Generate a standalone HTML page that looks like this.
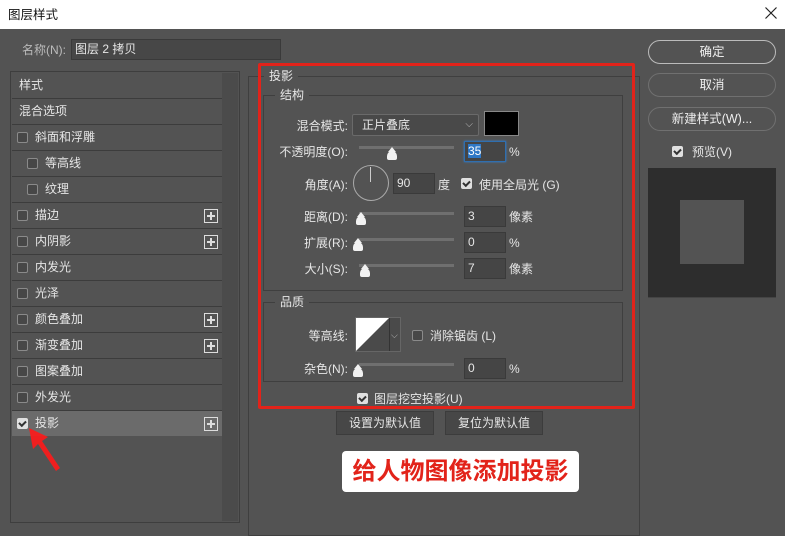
<!DOCTYPE html>
<html><head><meta charset="utf-8"><style>
*{margin:0;padding:0;box-sizing:border-box}
body{width:785px;height:521px;background:#535353;font-family:"Liberation Sans","Noto Sans CJK SC",sans-serif;font-size:12px;color:#e6e6e6;position:relative;overflow:hidden}
.a{position:absolute}
.t{white-space:nowrap;line-height:14px}
.row{position:absolute;left:12px;width:210px;height:26px;border-bottom:1px solid #3c3c3c;line-height:25px;padding-left:7px}
.cb{position:absolute;width:11px;height:11px;border:1px solid #8a8a8a;border-radius:2px;background:#474747}
.cbk{position:absolute;width:11px;height:11px;border-radius:2px;background:#e0e0e0}
.cbk:after{content:"";position:absolute;left:2px;top:1px;width:5px;height:3px;border-left:2px solid #333;border-bottom:2px solid #333;transform:rotate(-45deg) translate(-1px,1px)}
.plus{position:absolute;right:4px;top:6px;width:14px;height:14px;border:1px solid #ddd}
.plus:before{content:"";position:absolute;left:2px;top:5px;width:8px;height:2px;background:#ddd}
.plus:after{content:"";position:absolute;left:5px;top:2px;width:2px;height:8px;background:#ddd}
.inp{position:absolute;height:21px;background:#454545;border:1px solid #3a3a3a;color:#e6e6e6;line-height:19px;padding-left:3px}
.sl{position:absolute;height:3px;background:#6f6f6f}
.th{position:absolute;width:10px;height:9px;background:#f2f2f2;border-radius:5px 5px 2px 2px}
.th:before{content:"";position:absolute;left:1px;top:-4px;border-left:4px solid transparent;border-right:4px solid transparent;border-bottom:5px solid #f2f2f2}
.btn{position:absolute;height:24px;border:1px solid #707070;border-radius:12px;text-align:center;line-height:22px;color:#eee;font-size:12.5px}
.gb{position:absolute;border:1px solid #3f3f3f}
.lbl{position:absolute;background:#535353;padding:0 5px;line-height:14px}
.r{text-align:right}
</style></head><body>
<div class="a" style="left:0;top:0;width:785px;height:29px;background:#fff"></div>
<div class="a t" style="left:8px;top:8px;color:#111;font-size:12.5px">图层样式</div>
<svg class="a" style="left:765px;top:7px" width="12" height="12"><path d="M0.5 0.5L11.5 11.5M11.5 0.5L0.5 11.5" stroke="#222" stroke-width="1.2"/></svg>

<div class="a t" style="left:22px;top:43px;color:#bbb">名称(N):</div>
<div class="inp" style="left:71px;top:39px;width:210px;height:21px;background:#474747">图层 2 拷贝</div>

<div class="a" style="left:10px;top:71px;width:230px;height:452px;border:1px solid #3e3e3e;background:#535353"></div>
<div class="a" style="left:222px;top:73px;width:16px;height:448px;background:#4b4b4b"></div>
<div class="row" style="top:73px">样式</div>
<div class="row" style="top:99px">混合选项</div>
<div class="row" style="top:125px"><span class="cb" style="left:5px;top:7px"></span><span style="padding-left:16px">斜面和浮雕</span></div>
<div class="row" style="top:151px"><span class="cb" style="left:15px;top:7px"></span><span style="padding-left:26px">等高线</span></div>
<div class="row" style="top:177px"><span class="cb" style="left:15px;top:7px"></span><span style="padding-left:26px">纹理</span></div>
<div class="row" style="top:203px"><span class="cb" style="left:5px;top:7px"></span><span style="padding-left:16px">描边</span><span class="plus"></span></div>
<div class="row" style="top:229px"><span class="cb" style="left:5px;top:7px"></span><span style="padding-left:16px">内阴影</span><span class="plus"></span></div>
<div class="row" style="top:255px"><span class="cb" style="left:5px;top:7px"></span><span style="padding-left:16px">内发光</span></div>
<div class="row" style="top:281px"><span class="cb" style="left:5px;top:7px"></span><span style="padding-left:16px">光泽</span></div>
<div class="row" style="top:307px"><span class="cb" style="left:5px;top:7px"></span><span style="padding-left:16px">颜色叠加</span><span class="plus"></span></div>
<div class="row" style="top:333px"><span class="cb" style="left:5px;top:7px"></span><span style="padding-left:16px">渐变叠加</span><span class="plus"></span></div>
<div class="row" style="top:359px"><span class="cb" style="left:5px;top:7px"></span><span style="padding-left:16px">图案叠加</span></div>
<div class="row" style="top:385px"><span class="cb" style="left:5px;top:7px"></span><span style="padding-left:16px">外发光</span></div>
<div class="row" style="top:411px;background:#6b6b6b;border-bottom:none;height:25px"><span class="cbk" style="left:5px;top:7px"></span><span style="padding-left:16px">投影</span><span class="plus"></span></div>
<svg class="a" style="left:26px;top:428px" width="40" height="44"><polygon points="3,0 22,9 16,13 34,40 30,43 12,16 7,21" fill="#ff1a1a" opacity=".9"/></svg>

<div class="gb" style="left:248px;top:76px;width:392px;height:460px"></div>
<div class="lbl" style="left:264px;top:69px">投影</div>
<div class="gb" style="left:263px;top:95px;width:360px;height:196px"></div>
<div class="lbl" style="left:275px;top:88px">结构</div>

<div class="a t r" style="left:270px;top:119px;width:78px">混合模式:</div>
<div class="inp" style="left:352px;top:114px;width:127px;height:22px;background:#494949;border-color:#6a6a6a;border-radius:2px;line-height:20px;padding-left:9px">正片叠底<span style="position:absolute;right:5px;top:0;color:#bbb;font-size:10px">⌵</span></div>
<div class="a" style="left:484px;top:111px;width:35px;height:25px;background:#000;border:1px solid #888"></div>

<div class="a t r" style="left:260px;top:145px;width:88px">不透明度(O):</div>
<div class="sl" style="left:359px;top:146px;width:95px"></div>
<div class="th" style="left:387px;top:151px"></div>
<div class="inp" style="left:464px;top:141px;width:42px;border-color:#2f6fb0;box-shadow:0 0 2px #3a80d0"><span style="background:#2f78c6;color:#fff">35</span></div>
<div class="a t" style="left:509px;top:145px">%</div>

<div class="a t r" style="left:270px;top:178px;width:78px">角度(A):</div>
<div class="a" style="left:353px;top:165px;width:36px;height:36px;border:1px solid #aaa;border-radius:50%"></div>
<div class="a" style="left:370px;top:167px;width:1px;height:15px;background:#ccc"></div>
<div class="inp" style="left:393px;top:173px;width:42px">90</div>
<div class="a t" style="left:438px;top:178px">度</div>
<div class="cbk" style="left:461px;top:178px"></div>
<div class="a t" style="left:479px;top:178px">使用全局光 (G)</div>

<div class="a t r" style="left:270px;top:210px;width:78px">距离(D):</div>
<div class="sl" style="left:359px;top:212px;width:95px"></div>
<div class="th" style="left:356px;top:216px"></div>
<div class="inp" style="left:464px;top:206px;width:42px">3</div>
<div class="a t" style="left:509px;top:210px">像素</div>

<div class="a t r" style="left:270px;top:236px;width:78px">扩展(R):</div>
<div class="sl" style="left:359px;top:238px;width:95px"></div>
<div class="th" style="left:353px;top:242px"></div>
<div class="inp" style="left:464px;top:232px;width:42px">0</div>
<div class="a t" style="left:509px;top:236px">%</div>

<div class="a t r" style="left:270px;top:262px;width:78px">大小(S):</div>
<div class="sl" style="left:359px;top:264px;width:95px"></div>
<div class="th" style="left:360px;top:268px"></div>
<div class="inp" style="left:464px;top:258px;width:42px">7</div>
<div class="a t" style="left:509px;top:262px">像素</div>

<div class="gb" style="left:263px;top:302px;width:360px;height:80px"></div>
<div class="lbl" style="left:275px;top:295px">品质</div>
<div class="a t r" style="left:270px;top:329px;width:78px">等高线:</div>
<div class="a" style="left:355px;top:317px;width:46px;height:35px;border:1px solid #666;background:#4a4a4a"></div>
<svg class="a" style="left:356px;top:318px" width="33" height="33"><polygon points="0,0 33,0 0,33" fill="#fff"/></svg>
<div class="a" style="left:389px;top:318px;width:1px;height:33px;background:#333"></div>
<div class="a t" style="left:391px;top:328px;color:#bbb;font-size:9px">⌵</div>
<div class="cb" style="left:412px;top:330px"></div>
<div class="a t" style="left:430px;top:329px">消除锯齿 (L)</div>

<div class="a t r" style="left:270px;top:362px;width:78px">杂色(N):</div>
<div class="sl" style="left:359px;top:363px;width:95px"></div>
<div class="th" style="left:353px;top:368px"></div>
<div class="inp" style="left:464px;top:358px;width:42px">0</div>
<div class="a t" style="left:509px;top:362px">%</div>

<div class="cbk" style="left:357px;top:393px"></div>
<div class="a t" style="left:374px;top:392px">图层挖空投影(U)</div>

<div class="a" style="left:258px;top:63px;width:377px;height:346px;border:3px solid #e2231a;border-radius:2px"></div>

<div class="a" style="left:336px;top:411px;width:98px;height:24px;background:#474747;border:1px solid #3c3c3c;text-align:center;line-height:22px">设置为默认值</div>
<div class="a" style="left:445px;top:411px;width:98px;height:24px;background:#474747;border:1px solid #3c3c3c;text-align:center;line-height:22px">复位为默认值</div>

<div class="a" style="left:342px;top:451px;width:237px;height:41px;background:#fff;border-radius:4px;text-align:center;line-height:41px;color:#e2231a;font-size:24px;font-weight:bold">给人物图像添加投影</div>

<div class="btn" style="left:648px;top:40px;width:128px;border-color:#bbb">确定</div>
<div class="btn" style="left:648px;top:73px;width:128px">取消</div>
<div class="btn" style="left:648px;top:107px;width:128px">新建样式(W)...</div>
<div class="cbk" style="left:672px;top:146px"></div>
<div class="a t" style="left:692px;top:145px">预览(V)</div>
<div class="a" style="left:648px;top:168px;width:128px;height:130px;background:#2d2d2d;border-bottom:1px solid #444"></div>
<div class="a" style="left:680px;top:200px;width:64px;height:64px;background:#535353"></div>
</body></html>
